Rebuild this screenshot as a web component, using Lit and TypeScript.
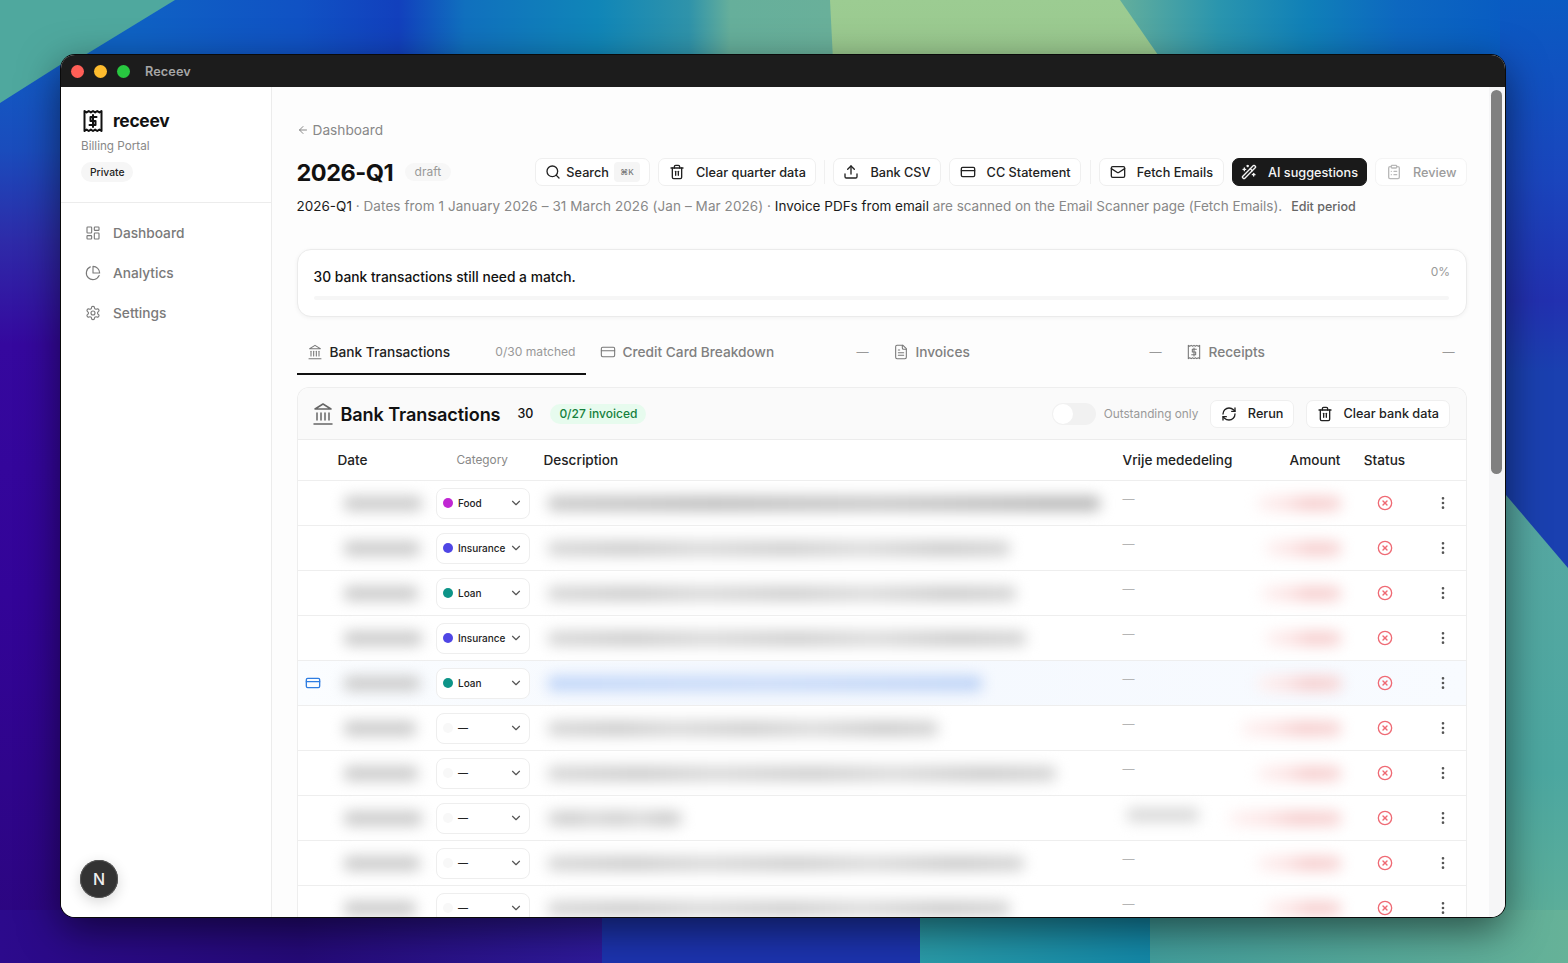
import { LitElement, html, css, svg } from "lit";
import { customElement } from "lit/decorators.js";

const P: Record<string, any> = {
  search: svg`<circle cx="11" cy="11" r="8"/><path d="m21 21-4.3-4.3"/>`,
  trash: svg`<path d="M3 6h18"/><path d="M19 6v14c0 1-1 2-2 2H7c-1 0-2-1-2-2V6"/><path d="M8 6V4c0-1 1-2 2-2h4c1 0 2 1 2 2v2"/><path d="M10 11v6"/><path d="M14 11v6"/>`,
  upload: svg`<path d="M21 15v4a2 2 0 0 1-2 2H5a2 2 0 0 1-2-2v-4"/><path d="m17 8-5-5-5 5"/><path d="M12 3v12"/>`,
  card: svg`<rect x="2" y="5" width="20" height="14" rx="2"/><path d="M2 10h20"/>`,
  mail: svg`<rect x="2" y="4" width="20" height="16" rx="2"/><path d="m22 7-8.97 5.7a1.94 1.94 0 0 1-2.06 0L2 7"/>`,
  wand: svg`<path d="m21.64 3.64-1.28-1.28a1.21 1.21 0 0 0-1.72 0L2.36 18.64a1.21 1.21 0 0 0 0 1.72l1.28 1.28a1.2 1.2 0 0 0 1.72 0L21.64 5.36a1.2 1.2 0 0 0 0-1.72"/><path d="m14 7 3 3"/><path d="M5 6v4"/><path d="M19 14v4"/><path d="M10 2v2"/><path d="M7 8H3"/><path d="M21 16h-4"/><path d="M11 3H9"/>`,
  clip: svg`<rect x="8" y="2" width="8" height="4" rx="1"/><path d="M16 4h2a2 2 0 0 1 2 2v14a2 2 0 0 1-2 2H6a2 2 0 0 1-2-2V6a2 2 0 0 1 2-2h2"/><path d="M12 11h4"/><path d="M12 16h4"/><path d="M8 11h.01"/><path d="M8 16h.01"/>`,
  bank: svg`<path d="M3 22h18"/><path d="M6 18v-7"/><path d="M10 18v-7"/><path d="M14 18v-7"/><path d="M18 18v-7"/><path d="m12 2 8 5H4z"/>`,
  file: svg`<path d="M15 2H6a2 2 0 0 0-2 2v16a2 2 0 0 0 2 2h12a2 2 0 0 0 2-2V7Z"/><path d="M14 2v4a2 2 0 0 0 2 2h4"/><path d="M10 9H8"/><path d="M16 13H8"/><path d="M16 17H8"/>`,
  logo: svg`<path d="M3.5 2l2.125 1.4L7.75 2l2.125 1.4L12 2l2.125 1.4L16.25 2l2.125 1.4L20.5 2v20l-2.125-1.4L16.25 22l-2.125-1.4L12 22l-2.125-1.4L7.75 22l-2.125-1.4L3.5 22z"/><path d="M15.5 8H9.5v4h5v4H8.5"/><path d="M12 6v12"/>`,
  dash: svg`<rect x="3" y="3" width="7" height="9" rx="1"/><rect x="14" y="3" width="7" height="5" rx="1"/><rect x="14" y="12" width="7" height="9" rx="1"/><rect x="3" y="16" width="7" height="5" rx="1"/>`,
  pie: svg`<path d="M21.21 15.89A10 10 0 1 1 8 2.83"/><path d="M22 12A10 10 0 0 0 12 2v10z"/>`,
  gear: svg`<path d="M12.22 2h-.44a2 2 0 0 0-2 2v.18a2 2 0 0 1-1 1.73l-.43.25a2 2 0 0 1-2 0l-.15-.08a2 2 0 0 0-2.73.73l-.22.38a2 2 0 0 0 .73 2.73l.15.1a2 2 0 0 1 1 1.72v.51a2 2 0 0 1-1 1.74l-.15.09a2 2 0 0 0-.73 2.73l.22.38a2 2 0 0 0 2.73.73l.15-.08a2 2 0 0 1 2 0l.43.25a2 2 0 0 1 1 1.73V20a2 2 0 0 0 2 2h.44a2 2 0 0 0 2-2v-.18a2 2 0 0 1 1-1.73l.43-.25a2 2 0 0 1 2 0l.15.08a2 2 0 0 0 2.73-.73l.22-.39a2 2 0 0 0-.73-2.73l-.15-.08a2 2 0 0 1-1-1.74v-.5a2 2 0 0 1 1-1.74l.15-.09a2 2 0 0 0 .73-2.73l-.22-.38a2 2 0 0 0-2.73-.73l-.15.08a2 2 0 0 1-2 0l-.43-.25a2 2 0 0 1-1-1.73V4a2 2 0 0 0-2-2z"/><circle cx="12" cy="12" r="3"/>`,
  refresh: svg`<path d="M3 12a9 9 0 0 1 9-9 9.75 9.75 0 0 1 6.74 2.74L21 8"/><path d="M21 3v5h-5"/><path d="M21 12a9 9 0 0 1-9 9 9.75 9.75 0 0 1-6.74-2.74L3 16"/><path d="M8 16H3v5"/>`,
  x: svg`<circle cx="12" cy="12" r="10"/><path d="m15 9-6 6"/><path d="m9 9 6 6"/>`,
  chev: svg`<path d="m6 9 6 6 6-6"/>`,
  back: svg`<path d="m12 19-7-7 7-7"/><path d="M19 12H5"/>`,
  kebab: svg`<circle cx="12" cy="5" r="1"/><circle cx="12" cy="12" r="1"/><circle cx="12" cy="19" r="1"/>`,
};

const ic = (n: string, cls = "i16") =>
  html`<svg class=${cls} viewBox="0 0 24 24" fill="none" stroke="currentColor" stroke-width="2" stroke-linecap="round" stroke-linejoin="round">${P[n]}</svg>`;

type Row = { cat: string; dot: string; date: number; desc: number; amt: number; vrije?: boolean; blue?: boolean };
const ROWS: Row[] = [
  { cat: "Food", dot: "#c026d3", date: 78, desc: 552, amt: 84 },
  { cat: "Insurance", dot: "#4f46e5", date: 76, desc: 462, amt: 76 },
  { cat: "Loan", dot: "#0d9488", date: 74, desc: 468, amt: 80 },
  { cat: "Insurance", dot: "#4f46e5", date: 78, desc: 478, amt: 76 },
  { cat: "Loan", dot: "#0d9488", date: 76, desc: 434, amt: 84, blue: true },
  { cat: "—", dot: "", date: 72, desc: 390, amt: 100 },
  { cat: "—", dot: "", date: 74, desc: 508, amt: 84 },
  { cat: "—", dot: "", date: 78, desc: 134, amt: 112, vrije: true },
  { cat: "—", dot: "", date: 76, desc: 476, amt: 84 },
  { cat: "—", dot: "", date: 72, desc: 462, amt: 76 },
];

@customElement("app-root")
export class AppRoot extends LitElement {
  static styles = css`
    :host { display: block; position: relative; width: 1568px; height: 963px; overflow: hidden; font-family: Inter, "Liberation Sans", sans-serif; color: #111; }
    .wall { position: absolute; inset: 0; width: 1568px; height: 963px; }
    .win { position: absolute; left: 61px; top: 55px; width: 1443.5px; height: 862px; border-radius: 14px; overflow: hidden; display: flex; flex-direction: column; background: #fff; box-shadow: 0 0 0 1px #0a0a0a, 0 12px 40px rgba(0,0,0,.55); }
    .title { height: 32px; flex: none; background: #1c1c1c; display: flex; align-items: center; padding-left: 10px; }
    .tl { width: 13px; height: 13px; border-radius: 50%; margin-right: 10px; }
    .title b { margin-left: 5px; font-size: 12.7px; font-weight: 600; color: #a6a6a6; letter-spacing: .1px; }
    .body { flex: 1; display: flex; min-height: 0; position: relative; }
    .i16 { width: 16px; height: 16px; flex: none; }
    .i14 { width: 14px; height: 14px; flex: none; }
    .i12 { width: 12px; height: 12px; flex: none; }
    .i24 { width: 24px; height: 24px; flex: none; color: #666; stroke-width: 1.5; }

    aside { width: 210px; flex: none; border-right: 1px solid #ececec; background: #fff; }
    .brandwrap { height: 116px; box-sizing: border-box; padding: 21.5px 0 0 20px; border-bottom: 1px solid #ececec; }
    .brand { display: flex; align-items: center; gap: 8px; height: 24px; font-size: 17.4px; font-weight: 700; letter-spacing: -.3px; }
    .logo { width: 24px; height: 24px; flex: none; }
    .sub { font-size: 11.7px; color: #888; margin-top: 5.5px; line-height: 16px; }
    .priv { display: inline-block; margin-top: 8px; background: #f6f6f6; border-radius: 10px; font-size: 10.3px; font-weight: 500; padding: 0 9px; line-height: 20px; color: #222; }
    nav { padding-top: 10px; display: flex; flex-direction: column; }
    nav a { height: 40px; display: flex; align-items: center; padding-left: 24px; gap: 12px; font-size: 13.7px; font-weight: 500; color: #7a7a7a; }
    nav svg { stroke-width: 1.7; }
    .avatar { position: absolute; left: 19px; bottom: 19px; width: 38px; height: 38px; border-radius: 50%; background: #333; box-shadow: 0 0 0 1px #555 inset, 0 4px 14px rgba(0,0,0,.16); color: #eee; display: flex; align-items: center; justify-content: center; font-size: 16px; font-weight: 500; }

    main { flex: 1; min-width: 0; background: #fdfdfd; overflow: hidden; padding: 34.5px 22px 0 24.5px; box-sizing: border-box; }
    .bar { width: 15.5px; flex: none; background: #f6f6f7; padding: 3px 3px 0 2px; box-sizing: border-box; }
    .thumb { height: 384px; background: #808080; border-radius: 6px; }

    .backl { display: flex; align-items: center; gap: 4px; height: 16px; font-size: 13.7px; color: #888; }
    .head { display: flex; align-items: center; height: 28px; margin-top: 20.5px; }
    h1 { font-size: 23.5px; font-weight: 700; margin: 0; letter-spacing: -.5px; }
    .draft { margin-left: 12px; background: #f7f7f7; border-radius: 9px; font-size: 12px; color: #999; padding: 0 9.5px; line-height: 18px; }
    .acts { margin-left: auto; display: flex; align-items: center; gap: 8.5px; }
    .btn { display: flex; align-items: center; gap: 11px; height: 28px; box-sizing: border-box; border: 1px solid #efefef; border-radius: 7px; background: #fff; padding: 0 9.5px; font-size: 12.7px; font-weight: 500; color: #222; white-space: nowrap; }
    .btn.dark { background: #1a1a1a; border-color: #1a1a1a; color: #f5f5f5; padding: 0 8px; }
    .btn.off { color: #9c9c9c; border-color: #f4f4f4; }
    .btn.off svg { opacity: .7; }
    .btn.s { gap: 5px; padding-right: 9px; }
    .btn.n9 { padding: 0 9px; }
    .kbd { font-size: 8px; color: #777; background: #f5f5f5; border-radius: 4px; width: 26px; height: 20px; display: flex; align-items: center; justify-content: center; }
    .vsep { width: 1px; height: 24px; background: #f0f0f0; }
    .vsep.t { margin: 0 -0.5px; }
    .desc { margin-top: 11px; height: 18px; display: flex; align-items: center; font-size: 13.5px; color: #888; white-space: nowrap; }
    .desc b { font-weight: 400; color: #1a1a1a; }
    .desc .wide { letter-spacing: .085px; }
    .desc .tight { letter-spacing: -.03px; }
    .desc .edit { margin-left: 9px; font-size: 12.5px; font-weight: 500; color: #666; }

    .prog { margin-top: 34px; height: 68px; box-sizing: border-box; border: 1px solid #ebebeb; border-radius: 14px; background: #fff; box-shadow: 0 1px 4px rgba(0,0,0,.05); padding: 14px 17px 0 16px; }
    .prog .row { display: flex; justify-content: space-between; }
    .prog .t { font-size: 13.8px; font-weight: 500; margin-top: 5px; }
    .prog .p { font-size: 12px; color: #999; margin-right: -1px; }
    .track { margin-top: 11px; height: 4px; border-radius: 2px; background: #f6f6f6; }

    .tabs { display: grid; grid-template-columns: repeat(4, 289px); gap: 4px; margin-top: 13px; height: 45px; }
    .tab { display: flex; align-items: center; padding: 0 10px 0 10px; gap: 7px; font-size: 13.7px; font-weight: 500; color: #808080; box-sizing: border-box; border-bottom: 2px solid transparent; }
    .tab svg { stroke-width: 1.6; color: #777; }
    .tab.on { color: #222; border-bottom-color: #111; }
    .tab .r { margin-left: auto; font-size: 12.1px; font-weight: 400; color: #999; }

    .panel { margin-top: 12px; border: 1px solid #eee; border-bottom: 0; border-radius: 12px 12px 0 0; background: #fff; overflow: hidden; }
    .ph { height: 52px; box-sizing: border-box; background: #fafafa; border-bottom: 1px solid #ececec; display: flex; align-items: center; padding: 0 16.5px 0 13px; }
    .ph h2 { font-size: 18.1px; font-weight: 600; margin: 0 0 0 6px; letter-spacing: -.1px; }
    .ph .n { margin-left: 17px; font-size: 12.5px; font-weight: 500; }
    .ph .ok { margin-left: 17px; background: #e7fbee; color: #15803d; font-size: 12px; font-weight: 500; border-radius: 10px; line-height: 20px; padding: 0 9px; }
    .tog { margin-left: auto; width: 44px; height: 22px; border-radius: 11px; background: #f1f1f1; box-sizing: border-box; padding: 1px; }
    .tog i { display: block; width: 20px; height: 20px; border-radius: 50%; background: #fff; }
    .ol { margin: 0 12px 0 8px; font-size: 11.8px; color: #999; }
    .ph .g12 { margin-left: 12px; }

    .g { display: grid; grid-template-columns: 40px 98px 108px 579px 166px 60px 72px 44px; align-items: center; }
    .th { height: 40px; border-bottom: 1px solid #eee; font-size: 13.6px; font-weight: 500; color: #222; }
    .th .cat { font-size: 11.8px; font-weight: 400; color: #888; padding-left: 21px; }
    .th .amt { justify-self: end; padding-right: 8px; }
    .th .st { justify-self: center; }
    .tr { height: 45px; box-sizing: border-box; border-bottom: 1px solid #eee; }
    .tr.blue { background: linear-gradient(90deg, #fbfdff, #f4f8fe 40%, #f8fbff); }
    .cardi { color: #2f7de1; justify-self: center; margin-left: -9px; }
    .blur { display: block; height: 15px; border-radius: 5px; filter: blur(7px); }
    .bd { background: #cbcbcb; margin-left: 6px; }
    .bs { background: linear-gradient(90deg, #d6d6d6, #cbcbcb 18%, #d8d8d8 33%, #cdcdcd 52%, #dadada 68%, #cacaca 86%, #d4d4d4); margin-left: 4px; }
    .bs.dk { background: linear-gradient(90deg, #c8c8c8, #bcbcbc 30%, #c6c6c6 60%, #b8b8b8 90%); }
    .bs.b { background: linear-gradient(90deg, #bed4f8, #c8daf8 50%, #bcd2f6); }
    .va { height: 14px; background: #d8d8d8; width: 72px; margin: 0 0 6px 4px; }
    .dash { font-size: 12px; color: #b5b5b5; display: block; line-height: 12px; margin-top: -8px; }
    .ba { justify-self: end; margin-right: 8px; background: linear-gradient(90deg, #fef4f4, #fce3e3 35%, #f6cdcd 62%, #f8d6d6); height: 15px; }
    .sel { width: 94px; height: 31px; box-sizing: border-box; border: 1px solid #eee; border-radius: 8px; background: #fff; display: flex; align-items: center; padding: 0 6px; font-size: 10px; font-weight: 500; color: #222; }
    .dot { width: 10px; height: 10px; border-radius: 50%; flex: none; margin-right: 5.5px; }
    .dot.none { background: #f8f8f8; }
    .sel svg { margin-left: auto; color: #555; }
    .stx { color: #ef6a74; justify-self: center; display: flex; }
    .keb { color: #555; justify-self: center; display: flex; }
  `;

  render() {
    return html`
      <svg class="wall" viewBox="0 0 1568 963" preserveAspectRatio="none">
        <defs>
          <linearGradient id="top" gradientUnits="userSpaceOnUse" x1="0" x2="830" y1="0" y2="0">
            <stop offset=".16" stop-color="#0f62c4"/><stop offset=".36" stop-color="#1052c4"/>
            <stop offset=".48" stop-color="#1240bd"/><stop offset=".56" stop-color="#1070be"/>
            <stop offset=".72" stop-color="#1086b8"/><stop offset=".83" stop-color="#2f93aa"/>
            <stop offset=".88" stop-color="#66af9b"/><stop offset="1" stop-color="#69b09a"/>
          </linearGradient>
          <linearGradient id="top2" gradientUnits="userSpaceOnUse" x1="1120" x2="1568" y1="0" y2="0">
            <stop offset="0" stop-color="#63ae9c"/><stop offset=".22" stop-color="#2a95ae"/>
            <stop offset=".42" stop-color="#1080b8"/><stop offset=".62" stop-color="#0d68c0"/><stop offset="1" stop-color="#0555c4"/>
          </linearGradient>
          <linearGradient id="grn" x1="0" x2="0" y1="0" y2="1">
            <stop offset="0" stop-color="#9ccc92"/><stop offset="1" stop-color="#97c48a"/>
          </linearGradient>
          <linearGradient id="lc" x1="0" x2="0" y1="0" y2="1">
            <stop offset="0" stop-color="#0f5ec6"/><stop offset=".12" stop-color="#1a4cbc"/>
            <stop offset=".22" stop-color="#2e2aa8"/><stop offset=".33" stop-color="#35089e"/>
            <stop offset=".6" stop-color="#330498"/><stop offset="1" stop-color="#2b067e"/>
          </linearGradient>
          <linearGradient id="rc" x1="0" x2="0" y1="0" y2="1">
            <stop offset="0" stop-color="#0a5ac2"/><stop offset=".3" stop-color="#1a45bd"/>
            <stop offset=".5" stop-color="#2230b0"/><stop offset=".62" stop-color="#1a40b0"/>
          </linearGradient>
          <linearGradient id="rc2" x1="0" x2="0" y1="0" y2="1">
            <stop offset="0" stop-color="#57a8a2"/><stop offset=".6" stop-color="#4ca7a0"/><stop offset="1" stop-color="#61b097"/>
          </linearGradient>
          <linearGradient id="bt" x1="0" x2="1" y1="0" y2="0">
            <stop offset="0" stop-color="#2c0a8c"/><stop offset=".5" stop-color="#250a78"/><stop offset="1" stop-color="#2e1a9a"/>
          </linearGradient>
          <linearGradient id="bt3" x1="0" x2="1" y1="0" y2="0">
            <stop offset="0" stop-color="#2a9ba8"/><stop offset="1" stop-color="#1388a8"/>
          </linearGradient>
          <linearGradient id="bt4" x1="0" x2="1" y1="0" y2="0">
            <stop offset="0" stop-color="#429e9c"/><stop offset="1" stop-color="#66b298"/>
          </linearGradient>
        </defs>
        <rect x="0" y="0" width="1568" height="963" fill="#1b3aaa"/>
        <rect x="0" y="0" width="840" height="120" fill="url(#top)"/>
        <rect x="1100" y="0" width="468" height="120" fill="url(#top2)"/>
        <rect x="0" y="40" width="70" height="923" fill="url(#lc)"/>
        <polygon points="175,0 85,55 60,65 0,103 0,0" fill="#4fa89e"/>
        <polygon points="830,0 1120,0 1158,55 1165,120 836,120" fill="url(#grn)"/>
        <rect x="1500" y="0" width="68" height="600" fill="url(#rc)"/>
        <polygon points="1500,488 1568,568 1568,963 1500,963" fill="url(#rc2)"/>
        <rect x="0" y="910" width="602" height="53" fill="url(#bt)"/>
        <rect x="602" y="910" width="318" height="53" fill="#1c33ae"/>
        <rect x="920" y="910" width="230" height="53" fill="url(#bt3)"/>
        <rect x="1150" y="910" width="418" height="53" fill="url(#bt4)"/>
      </svg>

      <div class="win">
        <div class="title">
          <span class="tl" style="background:#ff5f57"></span>
          <span class="tl" style="background:#febc2e"></span>
          <span class="tl" style="background:#28c840"></span>
          <b>Receev</b>
        </div>
        <div class="body">
          <aside>
            <div class="brandwrap">
              <div class="brand">${ic("logo", "logo")}<span>receev</span></div>
              <div class="sub">Billing Portal</div>
              <span class="priv">Private</span>
            </div>
            <nav>
              <a>${ic("dash")}Dashboard</a>
              <a>${ic("pie")}Analytics</a>
              <a>${ic("gear")}Settings</a>
            </nav>
          </aside>
          <div class="avatar">N</div>
          <main>
            <div class="backl">${ic("back", "i12")}Dashboard</div>
            <div class="head">
              <h1>2026-Q1</h1><span class="draft">draft</span>
              <div class="acts">
                <div class="btn s">${ic("search")}Search<span class="kbd">⌘K</span></div>
                <div class="btn">${ic("trash")}Clear quarter data</div>
                <span class="vsep t"></span>
                <div class="btn n9">${ic("upload")}Bank CSV</div>
                <div class="btn">${ic("card")}CC Statement</div>
                <span class="vsep"></span>
                <div class="btn">${ic("mail")}Fetch Emails</div>
                <div class="btn dark">${ic("wand")}AI suggestions</div>
                <div class="btn off">${ic("clip")}Review</div>
              </div>
            </div>
            <div class="desc"><b>2026-Q1</b>&nbsp;<span class="wide">· Dates from 1 January 2026 – 31 March 2026 (Jan – Mar 2026)</span>&nbsp;·&nbsp;<b>Invoice PDFs from email</b>&nbsp;<span class="tight">are scanned on the Email Scanner page (Fetch Emails).</span><span class="edit">Edit period</span></div>

            <div class="prog">
              <div class="row"><span class="t">30 bank transactions still need a match.</span><span class="p">0%</span></div>
              <div class="track"></div>
            </div>

            <div class="tabs">
              <div class="tab on">${ic("bank")}Bank Transactions<span class="r">0/30 matched</span></div>
              <div class="tab">${ic("card")}Credit Card Breakdown<span class="r">—</span></div>
              <div class="tab">${ic("file")}Invoices<span class="r">—</span></div>
              <div class="tab">${ic("logo")}Receipts<span class="r">—</span></div>
            </div>

            <div class="panel">
              <div class="ph">
                ${ic("bank", "i24")}
                <h2>Bank Transactions</h2>
                <span class="n">30</span>
                <span class="ok">0/27 invoiced</span>
                <span class="tog"><i></i></span>
                <span class="ol">Outstanding only</span>
                <div class="btn">${ic("refresh")}Rerun</div>
                <div class="btn g12">${ic("trash")}Clear bank data</div>
              </div>
              <div class="g th">
                <span></span><span>Date</span><span class="cat">Category</span><span>Description</span><span>Vrije mededeling</span><span class="amt">Amount</span><span class="st">Status</span><span></span>
              </div>
              ${ROWS.map((r, i) => html`
                <div class="g tr ${r.blue ? "blue" : ""}">
                  ${r.blue ? ic("card", "i16 cardi") : html`<span></span>`}
                  <span class="blur bd" style="width:${r.date}px"></span>
                  <div class="sel">
                    <span class="dot ${r.dot ? "" : "none"}" style=${r.dot ? `background:${r.dot}` : ""}></span>${r.cat}${ic("chev", "i14")}
                  </div>
                  <span class="blur bs ${r.blue ? "b" : ""} ${i === 0 ? "dk" : ""}" style="width:${r.desc}px"></span>
                  ${r.vrije ? html`<span class="blur va"></span>` : html`<span class="dash">—</span>`}
                  <span class="blur ba" style="width:${r.amt}px"></span>
                  <span class="stx">${ic("x")}</span>
                  <span class="keb">${ic("kebab")}</span>
                </div>`)}
            </div>
          </main>
          <div class="bar"><div class="thumb"></div></div>
        </div>
      </div>
    `;
  }
}
